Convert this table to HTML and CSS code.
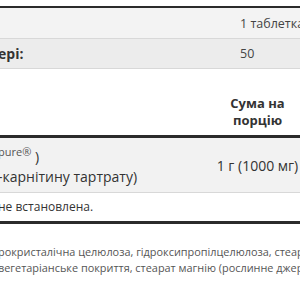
FILE: index.html
```html
<!DOCTYPE html>
<html lang="uk">
<head>
<meta charset="utf-8">
<link rel="stylesheet" href="styles.css">
</head>
<body>
<div class="page">
  <div class="info">
    <div class="row row-a"><span class="label"></span><span class="value">1 таблетка</span></div>
    <div class="row row-b"><span class="label bold">ері:</span><span class="value">50</span></div>
  </div>
  <div class="facts">
    <div class="facts-head"><span></span><span class="amount-head">Сума на<br>порцію</span></div>
    <div class="facts-row">
      <div class="name">
        <div class="line1"><sup>pure®</sup> )</div>
        <div class="line2">-карнітину тартрату)</div>
      </div>
      <div class="amount">1 г (1000 мг)</div>
    </div>
    <div class="facts-note">не встановлена.</div>
  </div>
  <div class="ingredients">
    <div class="ing-line">рокристалічна целюлоза, гідроксипропілцелюлоза, стеаринова кислота</div>
    <div class="ing-line">вегетаріанське покриття, стеарат магнію (рослинне джерело)</div>
  </div>
</div>
</body>
</html>
```
FILE: styles.css
```css
html, body {
  margin: 0;
  padding: 0;
  background: #ffffff;
  overflow: hidden;
}
body {
  font-family: "Open Sans", "Noto Sans", sans-serif;
  font-size: 14px;
  color: #333333;
}
.page {
  width: 320px;
  padding-top: 6px;
  margin-left: -2px;
}
.info {
  border-top: 2px solid #2b2b2b;
}
.row {
  display: grid;
  grid-template-columns: 242px 1fr;
  align-items: center;
  box-sizing: border-box;
  border-bottom: 1px solid #d8d8d8;
  white-space: nowrap;
}
.row-a { background: #f3f3f3; height: 31px; }
.row-b { background: #ececec; height: 30px; }
.bold { font-weight: 700; }
.value { color: #444; font-size: 12.5px; }

.facts-head {
  display: grid;
  grid-template-columns: 209px 101px;
  height: 69px;
  align-items: end;
  box-sizing: border-box;
  padding-bottom: 6px;
  border-bottom: 3px solid #2b2b2b;
}
.amount-head {
  font-weight: 700;
  font-size: 13px;
  text-align: center;
  line-height: 17px;
  color: #333;
}
.facts-row {
  display: grid;
  grid-template-columns: 209px 101px;
  align-items: center;
  background: #f2f2f2;
  border-bottom: 1px solid #d8d8d8;
  height: 55px;
  box-sizing: border-box;
}
.name {
  white-space: nowrap;
  line-height: 20px;
  padding-top: 4px;
}
.line1 sup {
  font-size: 11px;
  vertical-align: 6px;
  line-height: 0;
  color: #555;
}
.amount {
  text-align: center;
  color: #333;
}
.facts-note {
  height: 31px;
  line-height: 28px;
  box-sizing: border-box;
  border-bottom: 3px solid #2b2b2b;
  white-space: nowrap;
  font-size: 12px;
}
.ingredients {
  padding-top: 20px;
  font-size: 10.9px;
  line-height: 16px;
  color: #555;
  white-space: nowrap;
}
```
